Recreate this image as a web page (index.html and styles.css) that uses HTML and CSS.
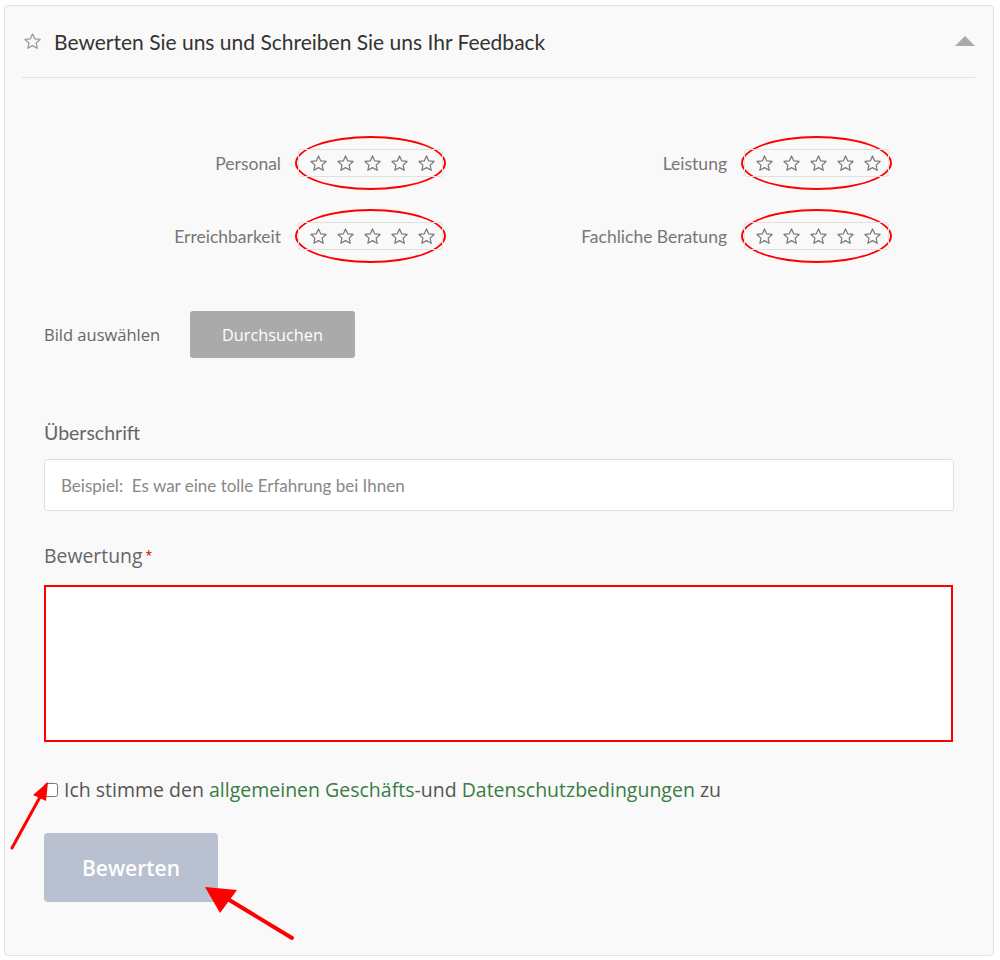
FILE: index.html
```html
<!DOCTYPE html>
<html>
<head>
<meta charset="utf-8">
<link rel="stylesheet" href="styles.css">
</head>
<body>
<div class="card">
  <div class="cardHeader">
    <svg class="headStar" width="19" height="19" viewBox="0 0 24 24"><path d="M12 2.5l2.9 6.2 6.7.7-5 4.6 1.4 6.6L12 17.2l-5.9 3.4 1.4-6.6-5-4.6 6.7-.7z" fill="none" stroke="#999" stroke-width="1.6" stroke-linejoin="round"/></svg>
    <span class="cardTitle">Bewerten Sie uns und Schreiben Sie uns Ihr Feedback</span>
    <span class="caret"></span>
  </div>

  <div class="cardBody">
    <div class="ratings">
      <div class="rateItem">
        <span class="rateLabel">Personal</span>
        <div class="ring"><div class="stars" id="stars1"></div></div>
      </div>
      <div class="rateItem">
        <span class="rateLabel">Leistung</span>
        <div class="ring"><div class="stars" id="stars2"></div></div>
      </div>
      <div class="rateItem">
        <span class="rateLabel">Erreichbarkeit</span>
        <div class="ring"><div class="stars" id="stars3"></div></div>
      </div>
      <div class="rateItem">
        <span class="rateLabel">Fachliche Beratung</span>
        <div class="ring"><div class="stars" id="stars4"></div></div>
      </div>
    </div>

    <div class="fileRow">
      <span class="fileLabel">Bild auswählen</span>
      <button class="browseButton">Durchsuchen</button>
    </div>

    <div class="fieldLabel">Überschrift</div>
    <input class="textInput" type="text" placeholder="Beispiel:  Es war eine tolle Erfahrung bei Ihnen">

    <div class="fieldLabel round reviewLabel">Bewertung<span class="req">*</span></div>
    <textarea class="reviewBox"></textarea>

    <label class="agreeRow">
      <input type="checkbox" class="agreeBox">
      <span>Ich stimme den <a href="#">allgemeinen Geschäfts</a>-und <a href="#">Datenschutzbedingungen</a> zu</span>
    </label>

    <button class="submitButton">Bewerten</button>
  </div>
</div>

<svg class="arrows" width="1000" height="960" viewBox="0 0 1000 960">
  <line x1="12" y1="848" x2="40" y2="797" stroke="#f00" stroke-width="3" stroke-linecap="round"/>
  <polygon points="48,782 33,795 46,801" fill="#f00"/>
  <line x1="292" y1="938" x2="226" y2="898" stroke="#f00" stroke-width="4" stroke-linecap="round"/>
  <polygon points="205,887 237,890 220,913" fill="#f00"/>
</svg>

<script>
  const starPath = '<svg width="19" height="19" viewBox="0 0 24 24"><path d="M12 2.5l2.9 6.2 6.7.7-5 4.6 1.4 6.6L12 17.2l-5.9 3.4 1.4-6.6-5-4.6 6.7-.7z" fill="none" stroke="#777" stroke-width="1.5" stroke-linejoin="round"/></svg>';
  document.querySelectorAll('.stars').forEach(box => {
    for (let i = 0; i < 5; i++) {
      box.innerHTML += '<span class="star">' + starPath + '</span>';
    }
  });
</script>
</body>
</html>
```

FILE: styles.css
```css
html, body {
  margin: 0;
  padding: 0;
  background: #fff;
}

.card {
  margin: 5px 0 0 4px;
  width: 990px;
  box-sizing: border-box;
  background: #f9f9f9;
  border: 1px solid #e1e1e1;
  border-radius: 4px;
  padding: 0 18px 53px 17px;
  font-family: Lato, "Liberation Sans", sans-serif;
}

.cardHeader {
  height: 72px;
  box-sizing: border-box;
  border-bottom: 1px solid #e3e3e3;
  display: flex;
  align-items: center;
  padding-left: 1px;
}

.headStar {
  margin-right: 12px;
}

.cardTitle {
  font-size: 21px;
  color: #333;
  flex: 1;
}

.caret {
  width: 0;
  height: 0;
  border-left: 10px solid transparent;
  border-right: 10px solid transparent;
  border-bottom: 10px solid #aaa;
  margin-top: -2px;
}

.cardBody {
  padding: 0 21px 0 22px;
}

.ratings {
  margin-top: 58px;
  display: grid;
  grid-template-columns: 402px 446px;
  row-gap: 19px;
}

.rateItem {
  display: flex;
  justify-content: flex-end;
  align-items: center;
}

.rateLabel {
  font-size: 17.5px;
  color: #777;
  margin-right: 14px;
}

.ring {
  width: 151px;
  height: 54px;
  box-sizing: border-box;
  border: 2px solid #f00;
  border-radius: 50%;
  padding: 11px 1px;
}

.stars {
  height: 28px;
  box-sizing: border-box;
  border: 1px solid #e0e0e0;
  border-radius: 3px;
  display: flex;
  align-items: center;
  padding-left: 10px;
  gap: 8px;
}

.star {
  width: 19px;
  height: 19px;
  display: block;
}

.star svg {
  display: block;
}

.fileRow {
  margin-top: 48px;
  display: flex;
  align-items: center;
}

.fileLabel {
  font-family: "Open Sans", sans-serif;
  font-size: 16.5px;
  color: #666;
  width: 146px;
}

.browseButton {
  width: 165px;
  height: 47px;
  background: #aaa;
  border: none;
  border-radius: 3px;
  color: #fff;
  font-family: "Open Sans", sans-serif;
  font-size: 16.3px;
}

.fieldLabel {
  margin-top: 63px;
  font-size: 19.5px;
  line-height: 24px;
  color: #666;
}

.round {
  font-family: "Open Sans", sans-serif;
  font-size: 19.4px;
}

.req {
  color: #b00;
  font-size: 12px;
  vertical-align: top;
  margin-left: 3px;
}

.textInput {
  display: block;
  margin-top: 14px;
  width: 100%;
  height: 52px;
  box-sizing: border-box;
  border: 1px solid #e0e0e0;
  border-radius: 3px;
  background: #fff;
  padding: 0 16px;
  font-family: Lato, sans-serif;
  font-size: 17px;
}

.textInput::placeholder {
  color: #888;
}

.reviewLabel {
  margin-top: 33px;
}

.reviewBox {
  display: block;
  margin-top: 17px;
  width: 909px;
  height: 157px;
  box-sizing: border-box;
  border: 2px solid #f00;
  background: #fff;
  resize: none;
}

.agreeRow {
  margin-top: 36px;
  display: flex;
  align-items: center;
  line-height: 24px;
  font-family: "Open Sans", sans-serif;
  font-size: 19.5px;
  color: #555;
}

.agreeRow a {
  color: #3a7d44;
  text-decoration: none;
}

.agreeBox {
  width: 14px;
  height: 14px;
  margin: 0 6px 0 0;
}

.submitButton {
  display: block;
  margin-top: 31px;
  width: 174px;
  height: 69px;
  background: #b9c0cf;
  border: none;
  border-radius: 4px;
  color: #fff;
  font-family: "Open Sans", sans-serif;
  font-size: 21px;
  font-weight: 600;
}

.arrows {
  position: absolute;
  left: 0;
  top: 0;
  pointer-events: none;
}
```
